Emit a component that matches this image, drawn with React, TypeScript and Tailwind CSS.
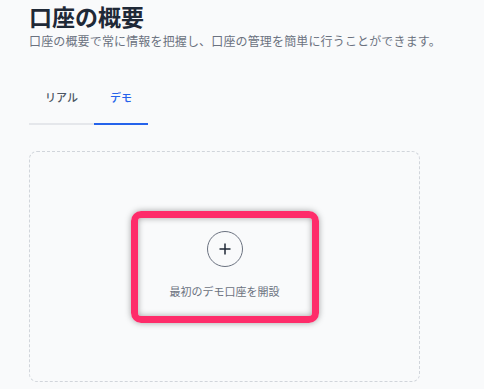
import { useState } from "react";

export default function App() {
  const [tab, setTab] = useState<"real" | "demo">("demo");

  const tabClass = (active: boolean) =>
    active
      ? "px-4 pb-[18px] text-[11px] leading-4 font-medium text-[#2563eb] border-b-2 border-[#2563eb]"
      : "px-4 pb-[18px] text-[11px] leading-4 font-medium text-[#4b5563] border-b-2 border-[#e5e7eb]";

  return (
    <main
      className="min-h-screen bg-[#f9fafb] pl-[29px] pt-px"
      style={{ fontFamily: '"Noto Sans CJK JP", "Noto Sans", sans-serif' }}
    >
      <h1 className="text-[23px] leading-[30px] font-bold text-[#1f2937]">
        口座の概要
      </h1>
      <p className="mt-[2px] text-[12px] leading-4 tracking-[0.15px] text-[#6b7280]">
        口座の概要で常に情報を把握し、口座の管理を簡単に行うことができます。
      </p>

      <div className="mt-10 flex">
        <button onClick={() => setTab("real")} className={tabClass(tab === "real")}>
          リアル
        </button>
        <button onClick={() => setTab("demo")} className={tabClass(tab === "demo")}>
          デモ
        </button>
      </div>

      <div className="mt-[26px] flex h-[231px] w-[391px] items-center justify-center rounded-lg border border-dashed border-[#d1d5db]">
        <button className="flex flex-col items-center rounded-[10px] border-[7px] border-[#fe2c6a] px-8 pt-[13px] pb-[17px] shadow-[0_0_6px_rgba(0,0,0,0.35),inset_0_0_6px_rgba(0,0,0,0.35)]">
          <span className="flex h-9 w-9 items-center justify-center rounded-full border border-[#6b7280] text-[#1f2937]">
            <svg width="12" height="12" viewBox="0 0 12 12" fill="none" stroke="currentColor" strokeWidth="1.5">
              <path d="M6 0.5v11M0.5 6h11" />
            </svg>
          </span>
          <span className="mt-4 text-[11px] leading-4 text-[#6b7280]">
            最初のデモ口座を開設
          </span>
        </button>
      </div>
    </main>
  );
}
